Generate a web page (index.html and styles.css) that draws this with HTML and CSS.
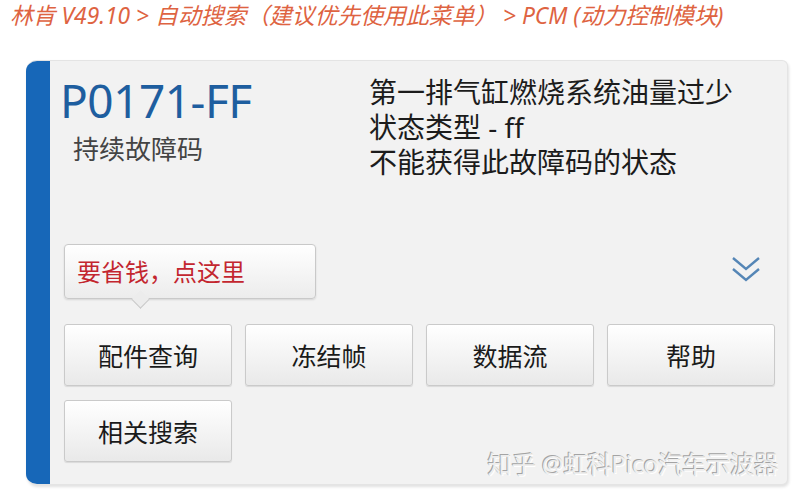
FILE: index.html
```html
<!DOCTYPE html>
<html lang="zh-CN">
<head>
<meta charset="utf-8">
<title>PCM 故障码</title>
<link rel="stylesheet" href="styles.css">
</head>
<body>
<header class="crumb">林肯 V49.10 &gt; 自动搜索（建议优先使用此菜单） &gt; PCM (动力控制模块)</header>

<section class="card">
  <div class="card-bar"></div>
  <div class="card-body">
    <div class="summary">
      <div class="code-block">
        <div class="code">P0171-FF</div>
        <div class="code-type">持续故障码</div>
      </div>
      <div class="desc">
        <p>第一排气缸燃烧系统油量过少</p>
        <p>状态类型 - ff</p>
        <p>不能获得此故障码的状态</p>
      </div>
    </div>

    <div class="promo-row">
      <button class="promo">要省钱，点这里</button>
      <svg class="expand" width="30" height="28" viewBox="0 0 30 28" aria-hidden="true">
        <path d="M2 2 L15 13 L28 2" fill="none" stroke="#5586b6" stroke-width="2.4" stroke-linejoin="miter"/>
        <path d="M2 13 L15 24 L28 13" fill="none" stroke="#5586b6" stroke-width="2.4" stroke-linejoin="miter"/>
      </svg>
    </div>

    <div class="actions">
      <button class="btn">配件查询</button>
      <button class="btn">冻结帧</button>
      <button class="btn">数据流</button>
      <button class="btn">帮助</button>
      <button class="btn">相关搜索</button>
    </div>
  </div>
  <div class="watermark">知乎 @虹科Pico汽车示波器</div>
</section>
</body>
</html>
```

FILE: styles.css
```css
* {
  box-sizing: border-box;
}

html, body {
  margin: 0;
  padding: 0;
  background: #ffffff;
}

body {
  width: 798px;
  height: 500px;
  overflow: hidden;
  font-family: "Noto Sans", "Noto Sans CJK SC", sans-serif;
  color: #1a1a1a;
}

/* breadcrumb line */
.crumb {
  padding: 1px 0 0 10px;
  height: 60px;
  font-size: 22.8px;
  line-height: 30px;
  font-style: italic;
  color: #de6341;
  white-space: nowrap;
}

/* fault code card */
.card {
  position: relative;
  display: flex;
  margin-left: 26px;
  width: 762px;
  height: 425px;
  background: #f2f2f2;
  border: 1px solid #e4e4e4;
  border-left: 0;
  border-radius: 11px 6px 6px 11px;
  box-shadow: 1px 2px 3px rgba(0, 0, 0, 0.12);
  overflow: hidden;
}

.card-bar {
  width: 24px;
  flex: none;
  background: #1767b8;
}

.card-body {
  flex: 1;
  padding: 13px 11px 0 14px;
  display: flex;
  flex-direction: column;
}

.summary {
  display: flex;
  height: 170px;
}

.code-block {
  width: 307px;
  flex: none;
}

.code {
  margin-left: -4px;
  font-family: "Noto Sans", sans-serif;
  font-size: 46px;
  line-height: 52px;
  color: #1e5e9f;
  letter-spacing: -0.5px;
}

.code-type {
  margin: 5px 0 0 9px;
  font-size: 26px;
  line-height: 36px;
  color: #444444;
}

.desc {
  margin-left: -2px;
  padding-top: 1px;
}

.desc p {
  margin: 0;
  font-size: 28px;
  line-height: 35px;
  color: #1c1c1c;
}

.promo-row {
  display: flex;
  align-items: flex-start;
  justify-content: space-between;
  height: 80px;
}

button {
  font-family: "Noto Sans", "Noto Sans CJK SC", sans-serif;
  cursor: pointer;
}

/* callout button with a tail pointing down */
.promo {
  position: relative;
  width: 252px;
  height: 55px;
  padding: 0 0 2px 12px;
  text-align: left;
  font-size: 24px;
  color: #c3262f;
  background: linear-gradient(#ffffff, #ececec);
  border: 1px solid #c9c9c9;
  border-radius: 4px;
  box-shadow: 0 1px 2px rgba(0, 0, 0, 0.12);
}

.promo::after {
  content: "";
  position: absolute;
  left: 69px;
  bottom: -8px;
  width: 12px;
  height: 12px;
  background: #ececec;
  border-right: 1px solid #c9c9c9;
  border-bottom: 1px solid #c9c9c9;
  transform: rotate(45deg);
}

.expand {
  margin: 12px 15px 0 0;
}

.actions {
  display: grid;
  grid-template-columns: repeat(4, 168px);
  column-gap: 13px;
  row-gap: 14px;
}

.btn {
  height: 62px;
  font-size: 25px;
  color: #1a1a1a;
  background: linear-gradient(#ffffff, #e9e9e9);
  border: 1px solid #cacaca;
  border-radius: 3px;
  box-shadow: 0 1px 1px rgba(0, 0, 0, 0.1);
}

/* embossed site watermark over the card corner */
.watermark {
  position: absolute;
  right: 9px;
  bottom: 6px;
  font-size: 24px;
  line-height: 28px;
  color: #eeeeee;
  text-shadow: -1px -1px 0 #a4a4a4, 1px 1px 0 #ffffff, 0 0 1px #808080;
  white-space: nowrap;
}
```
